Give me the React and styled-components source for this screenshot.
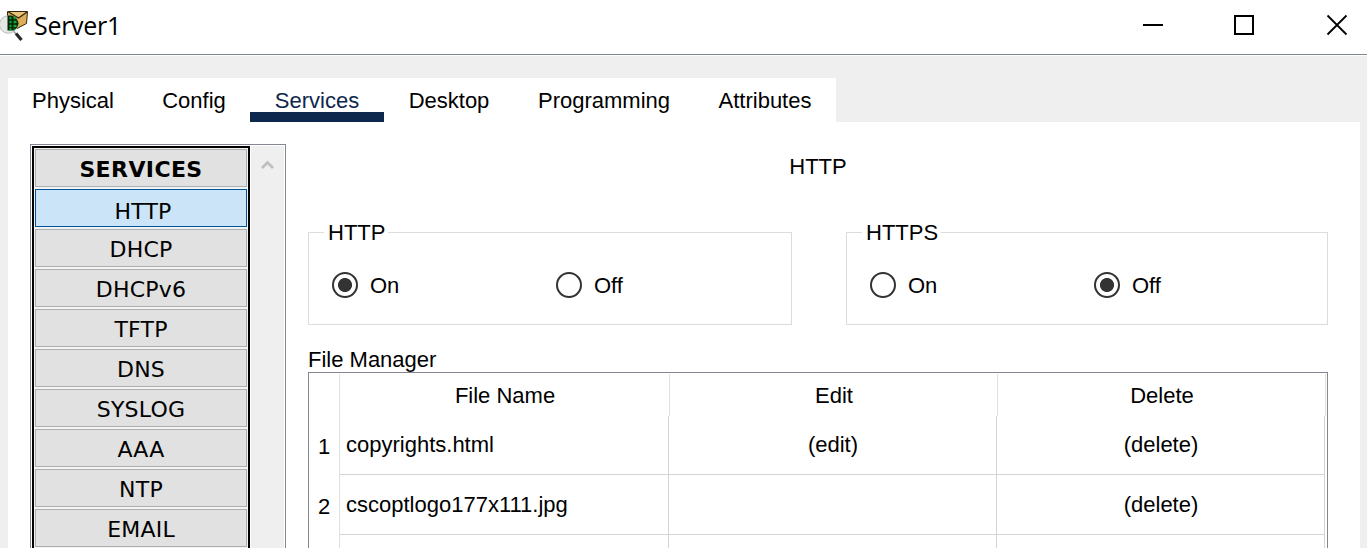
import React from "react";
import styled, { createGlobalStyle } from "styled-components";

const GlobalStyle = createGlobalStyle`
  * { box-sizing: border-box; }
  body {
    margin: 0;
    background: #efefef;
    color: #000;
    font: 22px/26px "Liberation Sans", Arial, sans-serif;
    overflow: hidden;
  }
`;

const Window = styled.div`
  display: flex;
  flex-direction: column;
  width: 1367px;
  height: 548px;
  overflow: hidden;
  background: #efefef;
`;

const TitleBar = styled.header`
  display: flex;
  align-items: center;
  flex: none;
  height: 56px;
  background: linear-gradient(#fff 54px, #7f868c 54px, #7f868c 55px, #fff 55px);
`;

const AppIcon = styled.svg`
  flex: none;
  width: 34px;
  height: 56px;
`;

const Title = styled.h1`
  flex: 1;
  margin: 0;
  padding-bottom: 7px;
  font: 400 25px/34px "Open Sans", "Noto Sans", sans-serif;
  letter-spacing: -0.3px;
`;

const WindowButtons = styled.div`
  display: flex;
  gap: 67px;
  padding: 0 18px 6px 0;
`;

const Glyph = styled.svg`
  display: block;
  width: 24px;
  height: 24px;

  &:last-child {
    margin-left: 2px;
  }
`;

const Body = styled.main`
  display: flex;
  flex-direction: column;
  flex: 1;
  padding: 22px 7px 0 8px;
`;

const Tabs = styled.nav`
  display: flex;
  flex: none;
  width: 828px;
  height: 44px;
  background: #fff;
`;

const Tab = styled.div`
  width: ${(p) => p.$width}px;
  padding-top: 10px;
  text-align: center;
  color: ${(p) => (p.$active ? "#0d274d" : "#000")};
  border-bottom: 10px solid ${(p) => (p.$active ? "#0d274d" : "transparent")};
`;

const Pane = styled.section`
  display: flex;
  align-items: flex-start;
  gap: 22px;
  flex: none;
  height: 426px;
  padding: 22px 32px 0 22px;
  background: #fff;
  overflow: hidden;
`;

const Sidebar = styled.aside`
  display: flex;
  gap: 1px;
  flex: none;
  width: 256px;
  height: 440px;
  padding: 1px;
  border: 1px solid #828790;
`;

const ServiceList = styled.div`
  display: flex;
  flex-direction: column;
  gap: 2px;
  flex: none;
  width: 218px;
  padding: 1px;
  border: 2px solid #000;
  background: #f3f3f3;
`;

const Service = styled.div`
  flex: none;
  height: 38px;
  padding-top: ${(p) => (p.$active ? 9 : 7)}px;
  padding-left: ${(p) => (p.$active ? 4 : 0)}px;
  border: 1px solid ${(p) => (p.$active ? "#00559b" : "#adadad")};
  background: ${(p) => (p.$active ? "#cce4f7" : "#e1e1e1")};
  text-align: center;
  white-space: nowrap;
  font: ${(p) => (p.$heading ? 700 : 400)} 22px/26px "DejaVu Sans", Verdana, sans-serif;
  letter-spacing: ${(p) => (p.$heading ? 0.4 : 0.2)}px;
`;

const Scrollbar = styled.div`
  flex: 1;
  background: #efefef;
`;

const Content = styled.div`
  flex: 1;
`;

const Heading = styled.h2`
  margin: 0;
  height: 75px;
  padding-top: 10px;
  text-align: center;
  font: inherit;
`;

const Groups = styled.div`
  display: flex;
  gap: 54px;
  margin-top: 1px;
`;

const Group = styled.fieldset`
  display: grid;
  grid-template-columns: 224px auto;
  align-content: start;
  width: ${(p) => p.$width}px;
  height: 105px;
  margin: 0;
  padding: 27px 23px 0;
  border: 1px solid #dcdcdc;
`;

const Legend = styled.legend`
  margin-left: -8px;
  padding: 0 3px 0 4px;
  line-height: 25px;
`;

const Option = styled.label`
  display: flex;
  align-items: center;
  gap: 12px;
  height: 26px;
`;

const OptionText = styled.span`
  padding-top: 1px;
`;

const Radio = styled.span`
  width: 26px;
  height: 26px;
  border: 2px solid #333;
  border-radius: 50%;
  background: ${(p) =>
    p.$checked ? "radial-gradient(circle, #333 6.6px, #fff 7.4px)" : "#fff"};
`;

const FileLabel = styled.div`
  height: 47px;
  padding-top: 22px;
`;

const Table = styled.div`
  display: flex;
  flex-direction: column;
  width: 1020px;
  height: 200px;
  padding-top: 1px;
  border: 1px solid #828790;
`;

const Row = styled.div`
  display: grid;
  grid-template-columns: 31px ${(p) => (p.$head ? "330px" : "329px")} 328px 328px;
  flex: none;
  height: ${(p) => p.$height}px;
`;

const HeadCell = styled.div`
  padding: 9px 0 0 1px;
  text-align: center;
  border-right: 1px solid #e0e0e0;
`;

const Index = styled.div`
  padding-top: ${(p) => p.$top + 2}px;
  text-align: center;
  border-right: 1px solid #e0e0e0;
`;

const Cell = styled.div`
  padding: ${(p) => p.$top}px 0 0 ${(p) => (p.$left ? 6 : 1)}px;
  text-align: ${(p) => (p.$left ? "left" : "center")};
  border-right: 1px solid #d4d4d4;
  border-bottom: 1px solid #d4d4d4;
`;

const tabs = [
  ["Physical", 130],
  ["Config", 112],
  ["Services", 134],
  ["Desktop", 130],
  ["Programming", 180],
  ["Attributes", 142],
];

const services = ["HTTP", "DHCP", "DHCPv6", "TFTP", "DNS", "SYSLOG", "AAA", "NTP", "EMAIL"];

const files = [
  { name: "copyrights.html", edit: "(edit)", remove: "(delete)", height: 59, top: 16 },
  { name: "cscoptlogo177x111.jpg", edit: "", remove: "(delete)", height: 60, top: 17 },
  { name: "", edit: "", remove: "", height: 60, top: 17 },
];

function ServerIcon() {
  return (
    <AppIcon viewBox="0 0 34 56">
      <path d="M7.5 11.5H27.5L26.5 23.5 17 28.5 7.5 20Z" fill="#dcae58" stroke="#33260c" />
      <path d="m8.5 12 10 6 8.500-6" fill="#e9c377" stroke="#33260c" strokeWidth="1.3" />
      <circle cx="8.3" cy="24.5" r="8.8" fill="#e6e8e6" stroke="#b9bdba" />
      <path d="M7.500 15.500h4q6 2 7 8-1 5-5 7h-6Z" fill="#04230a" />
      <path d="M9.500 18h2m2 0h2m-6 4h2m2 0h3m-7 4h2m2 0h3m-7 3.500h2m2 0h1" stroke="#12a832" strokeWidth="2.400" />
      <path d="m14 31.500 2 2.500" stroke="#aaa" strokeWidth="2" />
      <path d="m16 33.500 5.500 6.500" stroke="#292929" strokeWidth="3.200" />
    </AppIcon>
  );
}

function OnOff({ title, on, width }) {
  return (
    <Group $width={width}>
      <Legend>{title}</Legend>
      <Option><Radio $checked={on} /><OptionText>On</OptionText></Option>
      <Option><Radio $checked={!on} /><OptionText>Off</OptionText></Option>
    </Group>
  );
}

export default function App() {
  return (
    <Window>
      <GlobalStyle />
      <TitleBar>
        <ServerIcon />
        <Title>Server1</Title>
        <WindowButtons>
          <Glyph viewBox="0 0 24 24"><path d="M2 12h20" stroke="#000" strokeWidth="2" /></Glyph>
          <Glyph viewBox="0 0 24 24"><path d="M3 3h18v18H3z" fill="none" stroke="#000" strokeWidth="2" /></Glyph>
          <Glyph viewBox="0 0 24 24"><path d="m2.500 2.500 19 19m0-19-19 19" stroke="#000" strokeWidth="1.800" /></Glyph>
        </WindowButtons>
      </TitleBar>
      <Body>
        <Tabs>
          {tabs.map(([name, width]) => (
            <Tab key={name} $width={width} $active={name === "Services"}>{name}</Tab>
          ))}
        </Tabs>
        <Pane>
          <Sidebar>
            <ServiceList>
              <Service $heading>SERVICES</Service>
              {services.map((name) => (
                <Service key={name} $active={name === "HTTP"}>{name}</Service>
              ))}
            </ServiceList>
            <Scrollbar>
              <svg width="32" height="40" viewBox="0 0 32 40">
                <path d="m11 22 5.500-5.500 5.500 5.500" fill="none" stroke="#bfbfbf" strokeWidth="2.800" />
              </svg>
            </Scrollbar>
          </Sidebar>
          <Content>
            <Heading>HTTP</Heading>
            <Groups>
              <OnOff title="HTTP" on width={484} />
              <OnOff title="HTTPS" on={false} width={482} />
            </Groups>
            <FileLabel>File Manager</FileLabel>
            <Table>
              <Row $head $height={42}>
                <HeadCell />
                <HeadCell>File Name</HeadCell>
                <HeadCell>Edit</HeadCell>
                <HeadCell>Delete</HeadCell>
              </Row>
              {files.map((file, i) => (
                <Row key={i} $height={file.height}>
                  <Index $top={file.top}>{file.name && i + 1}</Index>
                  <Cell $left $top={file.top}>{file.name}</Cell>
                  <Cell $top={file.top}>{file.edit}</Cell>
                  <Cell $top={file.top}>{file.remove}</Cell>
                </Row>
              ))}
            </Table>
          </Content>
        </Pane>
      </Body>
    </Window>
  );
}
